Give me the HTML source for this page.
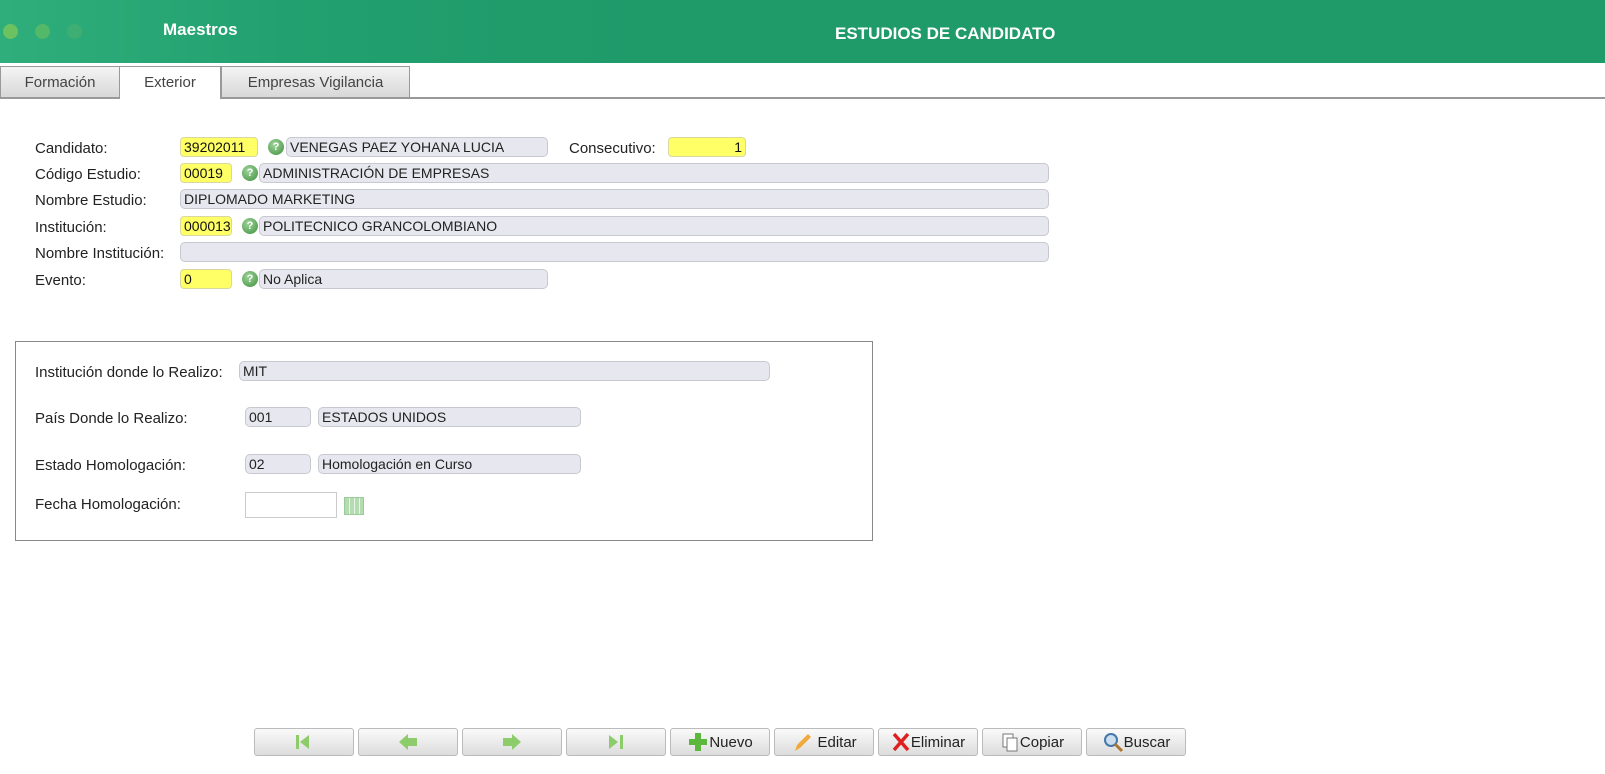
<!DOCTYPE html>
<html><head><meta charset="utf-8"><style>
*{box-sizing:border-box;margin:0;padding:0}
body{width:1605px;height:774px;background:#fff;font-family:"Liberation Sans",sans-serif;position:relative;overflow:hidden;color:#222}
.hdr{position:absolute;left:0;top:0;width:1605px;height:63px;background:linear-gradient(90deg,#2fae7c 0%,#22a06f 18%,#1f9a69 40%,#1f9a69 100%)}
.dot{position:absolute;top:24px;width:15px;height:15px;border-radius:50%}
.ab{position:absolute}
.lbl{position:absolute;font-size:15px;color:#222}
.y{position:absolute;height:20px;background:#ffff66;border:1px solid #d8d8a0;border-radius:4px;font-size:14px;padding:1px 3px;color:#111}
.g{position:absolute;height:20px;background:#e7e7ef;border:1px solid #c8c8d0;border-radius:5px;font-size:14px;padding:1px 3px;color:#222}
.q{position:absolute;width:16px;height:16px;border-radius:50%;background:radial-gradient(circle at 40% 35%,#9fd49a,#3d8f3d);color:#fff;font-size:11px;font-weight:bold;text-align:center;line-height:16px}
.tab{position:absolute;top:66px;height:32px;border:1px solid #999;background:linear-gradient(#f4f4f4,#d8d8d8);font-size:15px;color:#444;text-align:center;line-height:32px}
.btn{position:absolute;top:728px;width:100px;height:28px;border:1px solid #bbb;border-radius:3px;background:linear-gradient(#fafafa,#dcdcdc);font-size:15px;color:#222;display:flex;align-items:center;justify-content:center}
</style></head><body>
<div class="hdr">
<div class="dot" style="left:3px;background:#7cc65a;opacity:.8"></div>
<div class="dot" style="left:35px;background:#6cbf5a;opacity:.6"></div>
<div class="dot" style="left:67px;background:#5ab36a;opacity:.4"></div>
<div class="ab" style="left:163px;top:20px;color:#fff;font-weight:bold;font-size:17px">Maestros</div>
<div class="ab" style="left:835px;top:24px;color:#fff;font-weight:bold;font-size:17px">ESTUDIOS DE CANDIDATO</div>
</div>
<div class="ab" style="left:0;top:97px;width:1605px;height:2px;background:#999"></div>
<div class="tab" style="left:0;width:120px">Formación</div>
<div class="tab" style="left:119px;width:102px;background:#fff;border-bottom:none;height:33px">Exterior</div>
<div class="tab" style="left:221px;width:189px">Empresas Vigilancia</div>

<div class="lbl" style="left:35px;top:140px">Candidato:</div>
<div class="y" style="left:180px;top:137px;width:78px">39202011</div>
<div class="q" style="left:268px;top:139px">?</div>
<div class="g" style="left:286px;top:137px;width:262px">VENEGAS PAEZ YOHANA LUCIA</div>
<div class="lbl" style="left:569px;top:140px">Consecutivo:</div>
<div class="y" style="left:668px;top:137px;width:78px;text-align:right">1</div>

<div class="lbl" style="left:35px;top:166px">Código Estudio:</div>
<div class="y" style="left:180px;top:163px;width:52px">00019</div>
<div class="q" style="left:242px;top:165px">?</div>
<div class="g" style="left:259px;top:163px;width:790px">ADMINISTRACIÓN DE EMPRESAS</div>

<div class="lbl" style="left:35px;top:192px">Nombre Estudio:</div>
<div class="g" style="left:180px;top:189px;width:869px">DIPLOMADO MARKETING</div>

<div class="lbl" style="left:35px;top:219px">Institución:</div>
<div class="y" style="left:180px;top:216px;width:52px;overflow:hidden">000013</div>
<div class="q" style="left:242px;top:218px">?</div>
<div class="g" style="left:259px;top:216px;width:790px">POLITECNICO GRANCOLOMBIANO</div>

<div class="lbl" style="left:35px;top:245px">Nombre Institución:</div>
<div class="g" style="left:180px;top:242px;width:869px"></div>

<div class="lbl" style="left:35px;top:272px">Evento:</div>
<div class="y" style="left:180px;top:269px;width:52px">0</div>
<div class="q" style="left:242px;top:271px">?</div>
<div class="g" style="left:259px;top:269px;width:289px">No Aplica</div>

<div class="ab" style="left:15px;top:341px;width:858px;height:200px;border:1px solid #888"></div>
<div class="lbl" style="left:35px;top:364px">Institución donde lo Realizo:</div>
<div class="g" style="left:239px;top:361px;width:531px">MIT</div>
<div class="lbl" style="left:35px;top:410px">País Donde lo Realizo:</div>
<div class="g" style="left:245px;top:407px;width:66px">001</div>
<div class="g" style="left:318px;top:407px;width:263px">ESTADOS UNIDOS</div>
<div class="lbl" style="left:35px;top:457px">Estado Homologación:</div>
<div class="g" style="left:245px;top:454px;width:66px">02</div>
<div class="g" style="left:318px;top:454px;width:263px">Homologación en Curso</div>
<div class="lbl" style="left:35px;top:496px">Fecha Homologación:</div>
<div class="ab" style="left:245px;top:492px;width:92px;height:26px;border:1px solid #ccc"></div>
<div class="ab" style="left:344px;top:497px;width:20px;height:18px;border:1px solid #9c9;background:repeating-linear-gradient(90deg,#b5dcb0 0 4px,#e8f5e6 4px 5px);"></div>

<div class="btn" style="left:254px"><svg width="20" height="20"><rect x="2" y="3" width="3" height="14" fill="#8ccc6a"/><path d="M6 10L15 3V17Z" fill="#8ccc6a"/></svg></div>
<div class="btn" style="left:358px"><svg width="22" height="20"><path d="M2 10L11 2V6H20V14H11V18Z" fill="#8ccc6a"/></svg></div>
<div class="btn" style="left:462px"><svg width="22" height="20"><path d="M20 10L11 2V6H2V14H11V18Z" fill="#8ccc6a"/></svg></div>
<div class="btn" style="left:566px"><svg width="20" height="20"><path d="M3 3L12 10L3 17Z" fill="#8ccc6a"/><rect x="14" y="3" width="3" height="14" fill="#8ccc6a"/></svg></div>
<div class="btn" style="left:670px"><svg width="22" height="22"><path d="M8 2H14V8H20V14H14V20H8V14H2V8H8Z" fill="#5cb83c"/></svg>Nuevo</div>
<div class="btn" style="left:774px"><svg width="22" height="22"><path d="M4 20L6 14L17 3L20 6L9 17Z" fill="#f2a93b"/></svg>&nbsp;Editar</div>
<div class="btn" style="left:878px"><svg width="20" height="22"><path d="M3 3L17 19M17 3L3 19" stroke="#e02020" stroke-width="3.5"/></svg>Eliminar</div>
<div class="btn" style="left:982px"><svg width="20" height="22"><rect x="3" y="3" width="10" height="13" fill="#fff" stroke="#777"/><rect x="7" y="7" width="10" height="13" fill="#fff" stroke="#777"/></svg>Copiar</div>
<div class="btn" style="left:1086px"><svg width="22" height="22"><circle cx="9" cy="9" r="6" fill="#cde" stroke="#47a" stroke-width="2"/><path d="M13 13L20 20" stroke="#a73" stroke-width="3"/></svg>Buscar</div>
</body></html>
